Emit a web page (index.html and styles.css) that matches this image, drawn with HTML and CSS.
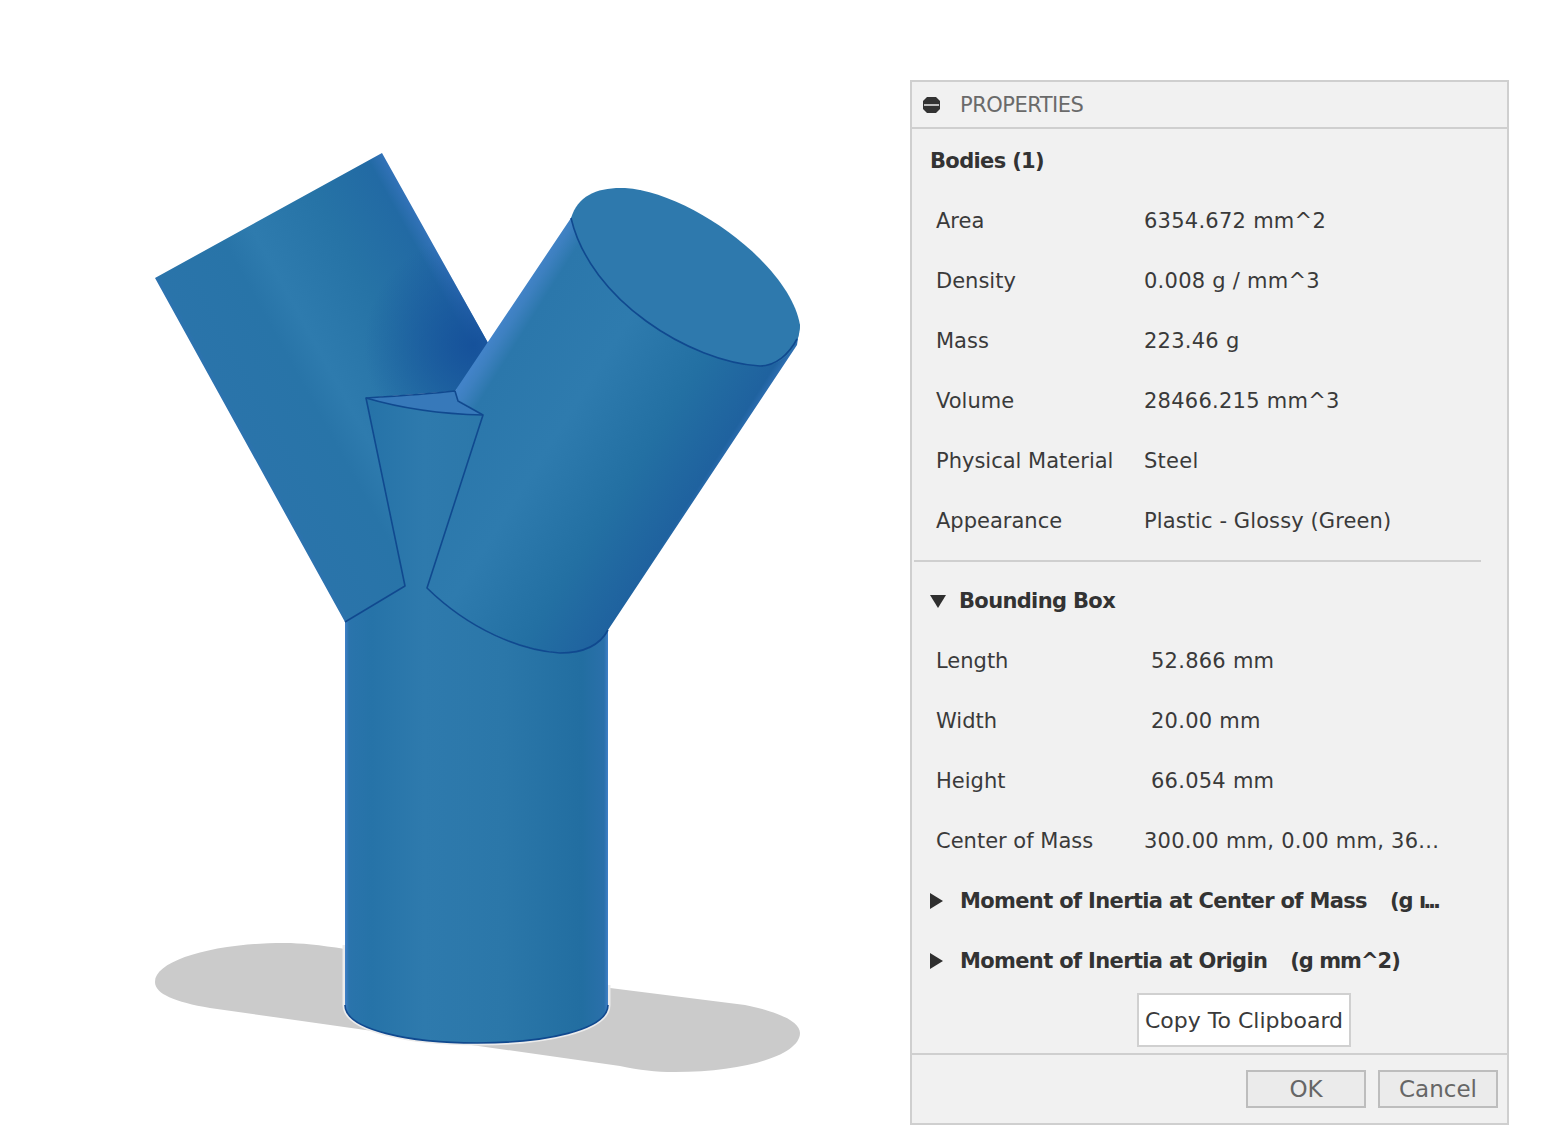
FILE: index.html
```html
<!DOCTYPE html>
<html lang="en">
<head>
<meta charset="utf-8">
<title>Properties</title>
<link rel="stylesheet" href="styles.css">
</head>
<body>
<main class="page">
  <div class="scene">
    <svg class="model" width="910" height="1148" viewBox="0 0 910 1148" xmlns="http://www.w3.org/2000/svg">
      <defs>
        <linearGradient id="stem" gradientUnits="userSpaceOnUse" x1="345" y1="0" x2="608" y2="0">
          <stop offset="0" stop-color="#4080c8"/>
          <stop offset="0.015" stop-color="#2a74ac"/>
          <stop offset="0.1" stop-color="#2673a8"/>
          <stop offset="0.3" stop-color="#2e7aad"/>
          <stop offset="0.6" stop-color="#2b77a9"/>
          <stop offset="0.9" stop-color="#226ea1"/>
          <stop offset="0.985" stop-color="#2a70aa"/>
          <stop offset="1" stop-color="#4080c8"/>
        </linearGradient>
        <linearGradient id="left" gradientUnits="userSpaceOnUse" x1="155" y1="278" x2="382" y2="153">
          <stop offset="0" stop-color="#2d72b0"/>
          <stop offset="0.02" stop-color="#2a74aa"/>
          <stop offset="0.3" stop-color="#2874a8"/>
          <stop offset="0.42" stop-color="#2e7bae"/>
          <stop offset="0.7" stop-color="#2673a6"/>
          <stop offset="0.94" stop-color="#226aa4"/>
          <stop offset="1" stop-color="#3272b8"/>
        </linearGradient>
        <radialGradient id="leftShade" gradientUnits="userSpaceOnUse" cx="474" cy="345" r="110">
          <stop offset="0" stop-color="#15509a" stop-opacity="0.95"/>
          <stop offset="1" stop-color="#15509a" stop-opacity="0"/>
        </radialGradient>
        <linearGradient id="right" gradientUnits="userSpaceOnUse" x1="513" y1="304" x2="737" y2="445">
          <stop offset="0" stop-color="#4283c8"/>
          <stop offset="0.03" stop-color="#3d80c0"/>
          <stop offset="0.09" stop-color="#2b77ab"/>
          <stop offset="0.4" stop-color="#2e7bae"/>
          <stop offset="0.72" stop-color="#2370a3"/>
          <stop offset="0.96" stop-color="#1f629f"/>
          <stop offset="1" stop-color="#3373b8"/>
        </linearGradient>
      </defs>
      <path class="shadow" d="M155 982C155 960 215 943 285 943C300 943 320 945 345 949L610 988L745 1005C780 1012 800 1022 800 1033C800 1055 745 1072 675 1072C655 1072 640 1070 620 1066L210 1008C175 1002 155 994 155 982Z"/>
      <path class="halo" d="M345 945L345 1005C345 1030 410 1043 477 1043C545 1043 608 1030 608 1005L608 985"/>
      <path class="left-arm" d="M155 278L382 153L492 350L455 391L366 398L405 586L345 622Z"/>
      <path class="left-shade" d="M155 278L382 153L492 350L455 391L366 398L405 586L345 622Z"/>
      <path class="stem" d="M345 622L405 586L366 398L483 415L427 588C470 630 520 650 560 653C585 653 600 645 608 630L608 1005C608 1030 545 1043 477 1043C410 1043 345 1030 345 1005Z"/>
      <path class="right-arm" d="M571 218L455 391L457 400L483 415L427 588C470 630 520 650 560 653C585 653 600 645 608 630L797 345L800 325L640 190Z"/>
      <path class="facet" d="M366 398C400 396 430 394 455 391L458 401L483 415C440 414 400 408 366 398Z"/>
      <path class="cap" d="M571 218C578 195 598 187 625 188C690 192 790 265 800 325C800 345 785 366 760 366C690 362 590 300 571 218Z"/>
      <path class="edge" d="M571 218C590 300 690 362 760 366C776 366 789 354 797 339"/>
      <path class="edge" d="M345 622L405 586L366 398C400 396 430 394 455 391L458 401L483 415L427 588C470 630 520 650 560 653C585 653 600 645 608 630"/>
      <path class="edge" d="M366 398C400 408 440 414 483 415"/>
      <path class="edge" d="M345 1005C345 1030 410 1043 477 1043C545 1043 608 1030 608 1005"/>
    </svg>
  </div>

  <section class="panel">
    <header class="panel-title">
      <svg class="collapse" width="18" height="16" viewBox="0 0 18 16" xmlns="http://www.w3.org/2000/svg">
        <path d="M4 0H13L17 4V12L13 16H4L0 12V4Z" fill="#333333"/>
        <rect x="1" y="7" width="15" height="2" fill="#bdbdbd"/>
      </svg>
      <span class="title-text">PROPERTIES</span>
    </header>
    <div class="panel-body">
      <div class="row head">Bodies (1)</div>
      <div class="row"><span class="label">Area</span><span class="value">6354.672 mm^2</span></div>
      <div class="row"><span class="label">Density</span><span class="value">0.008 g / mm^3</span></div>
      <div class="row"><span class="label">Mass</span><span class="value">223.46 g</span></div>
      <div class="row"><span class="label">Volume</span><span class="value">28466.215 mm^3</span></div>
      <div class="row"><span class="label">Physical Material</span><span class="value">Steel</span></div>
      <div class="row"><span class="label">Appearance</span><span class="value tight">Plastic - Glossy (Green)</span></div>
      <hr class="rule">
      <div class="row head"><span class="tri down"></span>Bounding Box</div>
      <div class="row wide"><span class="label">Length</span><span class="value">52.866 mm</span></div>
      <div class="row wide"><span class="label">Width</span><span class="value">20.00 mm</span></div>
      <div class="row wide"><span class="label">Height</span><span class="value">66.054 mm</span></div>
      <div class="row"><span class="label">Center of Mass</span><span class="value">300.00 mm, 0.00 mm, 36...</span></div>
      <div class="row head"><span class="tri right"></span>Moment of Inertia at Center of Mass<span class="unit">(g <span class="cut">ı...</span></span></div>
      <div class="row head"><span class="tri right"></span>Moment of Inertia at Origin<span class="unit">(g mm^2)</span></div>
      <div class="copy-line"><button class="copy" type="button">Copy To Clipboard</button></div>
    </div>
    <footer class="panel-foot">
      <button class="action" type="button">OK</button>
      <button class="action" type="button">Cancel</button>
    </footer>
  </section>
</main>
</body>
</html>
```
FILE: styles.css
```css
html, body {
  margin: 0;
  padding: 0;
  background: #ffffff;
}

.page {
  display: flex;
  align-items: flex-start;
  width: 1552px;
  height: 1148px;
  overflow: hidden;
  font-family: "DejaVu Sans", "Liberation Sans", sans-serif;
  font-size: 21px;
  color: #3a3a3a;
}

.scene {
  width: 910px;
  flex: none;
}

.model {
  display: block;
  filter: blur(0.5px);
}

.shadow { fill: #cbcbcb; }
.halo { fill: none; stroke: #ececec; stroke-width: 5; }
.left-arm { fill: url(#left); }
.left-shade { fill: url(#leftShade); }
.stem { fill: url(#stem); }
.right-arm { fill: url(#right); }
.facet { fill: #3779ba; }
.cap { fill: #2e79ad; }
.edge { fill: none; stroke: #10498f; stroke-width: 1.6; stroke-linejoin: round; }

.panel {
  flex: none;
  width: 599px;
  margin-top: 80px;
  background: #f1f1f1;
}

.panel-title {
  display: flex;
  align-items: center;
  box-sizing: border-box;
  height: 49px;
  border: 2px solid #cfcfcf;
  padding-left: 11px;
  gap: 19px;
}

.title-text {
  color: #6a6a6a;
  font-size: 21px;
  letter-spacing: -0.5px;
}

.panel-body {
  box-sizing: border-box;
  height: 924px;
  padding-top: 2px;
  border-left: 2px solid #cfcfcf;
  border-right: 2px solid #cfcfcf;
}

.row {
  display: flex;
  align-items: center;
  height: 60px;
  padding-left: 24px;
  white-space: nowrap;
}

.label {
  width: 208px;
  flex: none;
}

.wide .label {
  width: 215px;
}

.value {
  letter-spacing: 0.25px;
}

.value.tight {
  letter-spacing: 0.1px;
}

.head {
  padding-left: 18px;
  font-weight: bold;
  color: #333333;
  letter-spacing: -0.65px;
}

.tri {
  width: 0;
  height: 0;
  flex: none;
  margin-right: 13px;
}

.tri.down {
  border-left: 8.5px solid transparent;
  border-right: 8.5px solid transparent;
  border-top: 13px solid #2f2f2f;
}

.tri.right {
  border-top: 8.5px solid transparent;
  border-bottom: 8.5px solid transparent;
  border-left: 13px solid #2f2f2f;
  margin-right: 17px;
}

.unit {
  margin-left: 23px;
  letter-spacing: -1px;
}

.cut {
  letter-spacing: -3px;
}

.rule {
  height: 2px;
  margin: 9px 26px 9px 2px;
  border: 0;
  background: #cfcfcf;
}

.copy-line {
  display: flex;
  justify-content: center;
  padding: 2px 0 0 69px;
}

.copy {
  box-sizing: border-box;
  width: 214px;
  height: 54px;
  padding: 0;
  border: 2px solid #d0d0d0;
  background: #ffffff;
  color: #3a3a3a;
  font: inherit;
  font-size: 22px;
}

.panel-foot {
  display: flex;
  justify-content: flex-end;
  gap: 12px;
  box-sizing: border-box;
  height: 72px;
  padding: 15px 9px 0 0;
  border: 2px solid #cfcfcf;
}

.action {
  box-sizing: border-box;
  width: 120px;
  height: 38px;
  padding: 0;
  border: 2px solid #bdbdbd;
  background: #ebebeb;
  color: #666666;
  font: inherit;
  font-size: 23px;
}
```
